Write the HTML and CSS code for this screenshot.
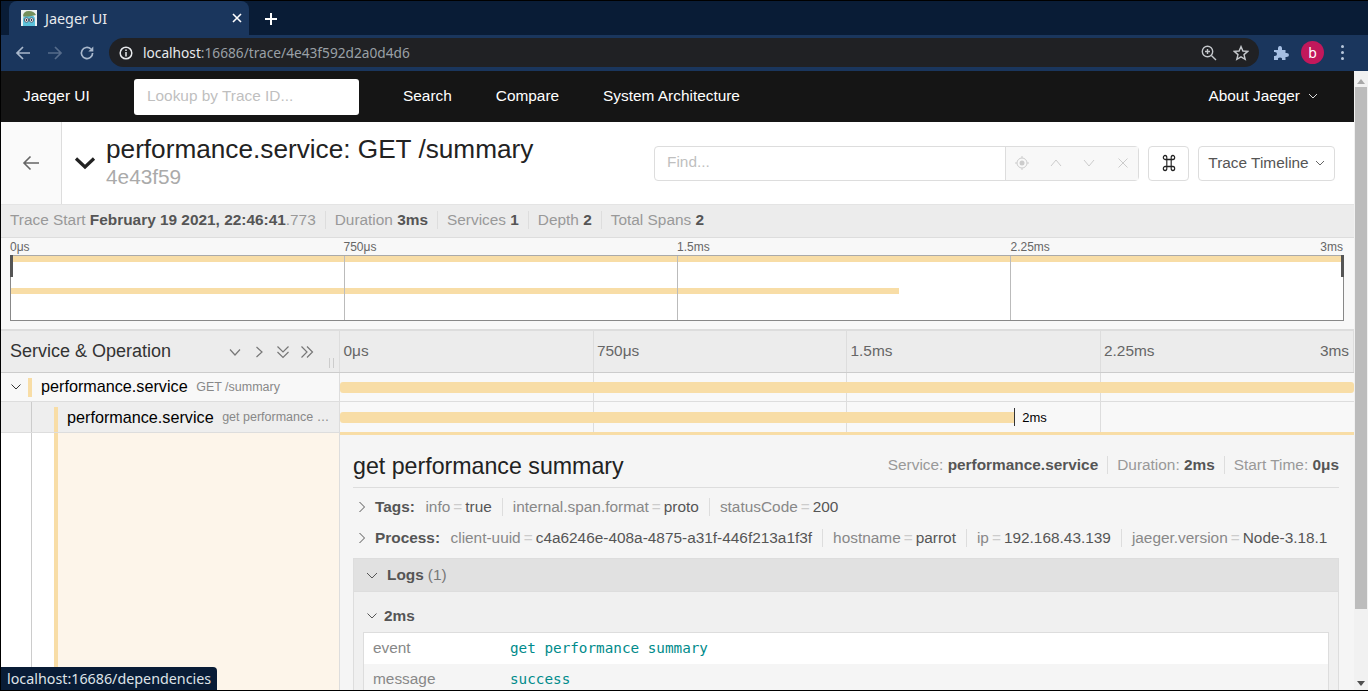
FILE: index.html
```html
<!DOCTYPE html>
<html lang="en">
<head>
    <meta charset="UTF-8">
    <title>Jaeger UI</title>
    <link rel="stylesheet" href="styles.css">
</head>
<body>
    <div class="window">
        <div class="tab-strip">
            <div class="tab">
                <svg class="favicon" width="16" height="16" viewBox="0 0 16 16">
                    <rect width="16" height="16" fill="#eef2f2"/>
                    <path d="M2 16 V9 Q2 5 8 5 Q14 5 14 9 V16 Z" fill="#5cc3dc"/>
                    <path d="M2 6.500 Q2 1 8 1 Q13 1 15 5 L8 6.500 Z" fill="#75905c"/>
                    <circle cx="5.500" cy="10" r="2.200" fill="#fff" stroke="#334" stroke-width=".7"/>
                    <circle cx="10.500" cy="10" r="2.200" fill="#fff" stroke="#334" stroke-width=".7"/>
                    <circle cx="5.500" cy="10" r=".9" fill="#223"/>
                    <circle cx="10.500" cy="10" r=".9" fill="#223"/>
                </svg>
                <span class="tab-title">Jaeger UI</span>
                <svg class="tab-close" width="10" height="10" viewBox="0 0 10 10"><path d="M1 1 L9 9 M9 1 L1 9" stroke="#fff" stroke-width="1.6"/></svg>
            </div>
            <svg class="new-tab" width="12" height="12" viewBox="0 0 12 12"><path d="M6 0 V12 M0 6 H12" stroke="#fff" stroke-width="2"/></svg>
        </div>
        <div class="toolbar">
            <svg class="tool" width="16" height="16" viewBox="0 0 16 16"><path d="M15 8 H2 M8 2 L2 8 L8 14" fill="none" stroke="#a9b8cc" stroke-width="1.7"/></svg>
            <svg class="tool" width="16" height="16" viewBox="0 0 16 16"><path d="M1 8 H14 M8 2 L14 8 L8 14" fill="none" stroke="#566c8b" stroke-width="1.7"/></svg>
            <svg class="tool" width="16" height="16" viewBox="0 0 16 16"><path d="M13.6 8 A5.6 5.6 0 1 1 11.8 3.9" fill="none" stroke="#a9b8cc" stroke-width="1.7"/><path d="M14.3 1.5 V6.5 H9.3 Z" fill="#a9b8cc"/></svg>
            <div class="omnibox">
                <svg width="14" height="14" viewBox="0 0 14 14"><circle cx="7" cy="7" r="5.8" fill="none" stroke="#e8eaed" stroke-width="1.5"/><path d="M7 6 V10.4 M7 3.6 V5" stroke="#e8eaed" stroke-width="1.5"/></svg>
                <span class="url"><b>localhost</b>:16686/trace/4e43f592d2a0d4d6</span>
                <svg class="zoom-icon" width="16" height="16" viewBox="0 0 16 16"><circle cx="6.5" cy="6.5" r="5.2" fill="none" stroke="#c4c7cb" stroke-width="1.4"/><path d="M10.4 10.4 L15 15 M4 6.5 H9 M6.5 4 V9" stroke="#c4c7cb" stroke-width="1.4"/></svg>
                <svg width="16" height="16" viewBox="0 0 16 16"><path d="M8 1.6 L9.9 6 L14.7 6.4 L11 9.6 L12.2 14.3 L8 11.8 L3.8 14.3 L5 9.6 L1.3 6.4 L6.1 6 Z" fill="none" stroke="#c4c7cb" stroke-width="1.4"/></svg>
            </div>
            <svg class="puzzle" width="16" height="16" viewBox="0 0 16 16"><path d="M1 5 H5 Q4.6 1 7 1 Q9.4 1 9 5 H12.5 V8 Q16 7.6 16 10 Q16 12.4 12.5 12 V15 H9 Q9.4 12.6 7 12.6 Q4.6 12.6 5 15 H1 V11 Q4 11.4 4 9 Q4 6.6 1 7 Z" fill="#a6bfe3"/></svg>
            <span class="avatar">b</span>
            <span class="menu-dots"><i></i><i></i><i></i></span>
        </div>
        <div class="page">
            <div class="content">
                <nav class="topnav">
                    <span class="brand">Jaeger UI</span>
                    <span class="lookup">Lookup by Trace ID...</span>
                    <a class="nav-link">Search</a>
                    <a class="nav-link">Compare</a>
                    <a class="nav-link">System Architecture</a>
                    <span class="about">About Jaeger
                        <svg width="10" height="6" viewBox="0 0 10 6"><path d="M1 1 L5 5 L9 1" fill="none" stroke="#ddd" stroke-width="1"/></svg>
                    </span>
                </nav>

                <header class="trace-header">
                    <div class="back-cell">
                        <svg width="18" height="16" viewBox="0 0 18 16"><path d="M17 8 H2 M8.500 1.500 L2 8 L8.500 14.500" fill="none" stroke="#666" stroke-width="1.6"/></svg>
                    </div>
                    <svg class="collapse-icon" width="22" height="14" viewBox="0 0 22 14"><path d="M2 2.500 L11 11 L20 2.500" fill="none" stroke="#222" stroke-width="3.200"/></svg>
                    <div class="trace-title">
                        <h1>performance.service: GET /summary</h1>
                        <small>4e43f59</small>
                    </div>
                    <div class="find-box">
                        <span class="find-input">Find...</span>
                        <span class="find-btns">
                            <svg width="14" height="14" viewBox="0 0 14 14"><circle cx="7" cy="7" r="5" fill="none" stroke="#ccc"/><circle cx="7" cy="7" r="2.500" fill="#ccc"/><path d="M7 0 V2 M7 12 V14 M0 7 H2 M12 7 H14" stroke="#ccc"/></svg>
                            <svg width="14" height="14" viewBox="0 0 14 14"><path d="M2 10 L7 4 L12 10" fill="none" stroke="#ccc"/></svg>
                            <svg width="14" height="14" viewBox="0 0 14 14"><path d="M2 4 L7 10 L12 4" fill="none" stroke="#ccc"/></svg>
                            <svg width="14" height="14" viewBox="0 0 14 14"><path d="M2.500 2.500 L11.500 11.500 M11.500 2.500 L2.500 11.500" fill="none" stroke="#ccc"/></svg>
                        </span>
                    </div>
                    <span class="kbd-btn">
                        <svg width="14" height="18" viewBox="0 0 16 18" preserveAspectRatio="none"><path d="M5.500 5.500 H10.500 V12.500 H5.500 Z M5.500 5.500 H3.500 A2 2 0 1 1 5.500 3.500 V5.500 M10.500 5.500 H12.500 A2 2 0 1 0 10.500 3.500 V5.500 M5.500 12.500 H3.500 A2 2 0 1 0 5.500 14.500 V12.500 M10.500 12.500 H12.500 A2 2 0 1 1 10.500 14.500 V12.500" fill="none" stroke="#222" stroke-width="1.300"/></svg>
                    </span>
                    <span class="view-btn">Trace Timeline
                        <svg width="10" height="6" viewBox="0 0 10 6"><path d="M1 1 L5 5 L9 1" fill="none" stroke="#666"/></svg>
                    </span>
                </header>

                <div class="summary">
                    <span class="stat">Trace Start <b>February 19 2021, 22:46:41</b>.773</span>
                    <span class="stat">Duration <b>3ms</b></span>
                    <span class="stat">Services <b>1</b></span>
                    <span class="stat">Depth <b>2</b></span>
                    <span class="stat">Total Spans <b>2</b></span>
                </div>

                <section class="minimap">
                    <div class="mini-labels">
                        <span>0μs</span><span>750μs</span><span>1.5ms</span><span>2.25ms</span><span class="last">3ms</span>
                    </div>
                    <div class="mini-canvas">
                        <div class="mini-bar mini-bar-root"></div>
                        <div class="mini-bar mini-bar-child" style="width: 66.7%"></div>
                        <div class="mini-ticks"><i></i><i></i><i></i><i></i></div>
                        <span class="handle handle-left"></span>
                        <span class="handle handle-right"></span>
                    </div>
                </section>

                <section class="timeline">
                    <div class="tl-header">
                        <div class="tl-left">
                            <span class="tl-title">Service &amp; Operation</span>
                            <span class="tl-controls">
                                <svg width="14" height="14" viewBox="0 0 14 14"><path d="M2 4.500 L7 10 L12 4.500" fill="none" stroke="#777" stroke-width="1.200"/></svg>
                                <svg width="14" height="14" viewBox="0 0 14 14"><path d="M4.500 2 L10 7 L4.500 12" fill="none" stroke="#777" stroke-width="1.200"/></svg>
                                <svg width="14" height="14" viewBox="0 0 14 14"><path d="M1.500 1.500 L7 7 L12.500 1.500 M1.500 7 L7 12.500 L12.500 7" fill="none" stroke="#777" stroke-width="1.200"/></svg>
                                <svg width="14" height="14" viewBox="0 0 14 14"><path d="M1.500 1.500 L7 7 L1.500 12.500 M7 1.500 L12.500 7 L7 12.500" fill="none" stroke="#777" stroke-width="1.200"/></svg>
                            </span>
                            <span class="resizer"></span>
                        </div>
                        <div class="tl-right tl-ticks">
                            <span>0μs</span><span>750μs</span><span>1.5ms</span><span>2.25ms</span><span class="last">3ms</span>
                        </div>
                    </div>

                    <div class="span-row">
                        <div class="span-name root-name">
                            <svg class="toggle" width="10" height="6" viewBox="0 0 10 6"><path d="M.500 .500 L5 5 L9.500 .500" fill="none" stroke="#333"/></svg>
                            <span class="color-mark"></span>
                            <span class="svc">performance.service</span>
                            <span class="op">GET /summary</span>
                        </div>
                        <div class="span-view">
                            <div class="grid-lines"><i></i><i></i><i></i><i></i></div>
                            <div class="span-bar" style="width: 100%"></div>
                        </div>
                    </div>

                    <div class="span-row child-row">
                        <div class="span-name child-name">
                            <span class="indent"></span>
                            <span class="color-mark"></span>
                            <span class="svc">performance.service</span>
                            <span class="op">get performance …</span>
                        </div>
                        <div class="span-view">
                            <div class="grid-lines"><i></i><i></i><i></i><i></i></div>
                            <div class="span-bar" style="width: 66.500%"></div>
                            <span class="span-label">2ms</span>
                        </div>
                    </div>

                    <div class="detail-row">
                        <div class="detail-gutter">
                            <span class="indent"></span>
                            <span class="color-strip"></span>
                            <span class="gutter-fill"></span>
                        </div>
                        <div class="detail">
                            <div class="detail-head">
                                <h2>get performance summary</h2>
                                <div class="detail-meta">
                                    <span class="stat">Service: <b>performance.service</b></span>
                                    <span class="stat">Duration: <b>2ms</b></span>
                                    <span class="stat">Start Time: <b>0μs</b></span>
                                </div>
                            </div>
                            <div class="kv-line kv-first">
                                <svg width="8" height="12" viewBox="0 0 8 12"><path d="M1.500 1 L6.500 6 L1.500 11" fill="none" stroke="#555"/></svg>
                                <b>Tags:</b>
                                <span class="kv">info<i>=</i><em>true</em></span>
                                <span class="kv">internal.span.format<i>=</i><em>proto</em></span>
                                <span class="kv">statusCode<i>=</i><em>200</em></span>
                            </div>
                            <div class="kv-line">
                                <svg width="8" height="12" viewBox="0 0 8 12"><path d="M1.500 1 L6.500 6 L1.500 11" fill="none" stroke="#555"/></svg>
                                <b>Process:</b>
                                <span class="kv">client-uuid<i>=</i><em>c4a6246e-408a-4875-a31f-446f213a1f3f</em></span>
                                <span class="kv">hostname<i>=</i><em>parrot</em></span>
                                <span class="kv">ip<i>=</i><em>192.168.43.139</em></span>
                                <span class="kv">jaeger.version<i>=</i><em>Node-3.18.1</em></span>
                            </div>
                            <div class="logs">
                                <div class="logs-head">
                                    <svg width="12" height="7" viewBox="0 0 12 7"><path d="M1 1 L6 6 L11 1" fill="none" stroke="#555"/></svg>
                                    <b>Logs</b> <span>(1)</span>
                                </div>
                                <div class="logs-body">
                                    <div class="log-time">
                                        <svg width="10" height="6" viewBox="0 0 10 6"><path d="M.500 .500 L5 5 L9.500 .500" fill="none" stroke="#555"/></svg>
                                        <b>2ms</b>
                                    </div>
                                    <div class="log-table">
                                        <div class="log-row"><span class="log-key">event</span><code>get performance summary</code></div>
                                        <div class="log-row log-row-alt"><span class="log-key">message</span><code>success</code></div>
                                    </div>
                                </div>
                            </div>
                        </div>
                    </div>
                </section>
            </div>
            <div class="scrollbar">
                <span class="arrow-up"></span>
                <span class="thumb"></span>
                <span class="arrow-down"></span>
            </div>
        </div>
        <div class="status-bubble">localhost:16686/dependencies</div>
    </div>
</body>
</html>
```
FILE: styles.css
```css
* {
    box-sizing: border-box;
}
html, body {
    margin: 0;
    height: 100%;
    overflow: hidden;
}
body {
    font-family: "Liberation Sans", Arial, sans-serif;
    background-color: #000;
}
b {
    font-weight: 700;
}

/* browser chrome */
.window {
    position: relative;
    height: 691px;
    border: 1px solid #000;
    border-right: 0;
    display: flex;
    flex-direction: column;
    overflow: hidden;
}
.tab-strip {
    height: 34px;
    flex: none;
    background-color: #091c36;
    display: flex;
    align-items: stretch;
    padding-left: 8px;
}
.tab {
    width: 240px;
    background-color: #1a365d;
    border-radius: 8px 8px 0 0;
    display: flex;
    align-items: center;
    padding-left: 12px;
    color: #e8eaed;
    font-family: "Noto Sans", sans-serif;
    font-size: 14.400px;
}
.tab-title {
    margin-left: 8px;
    flex: 1;
}
.tab-close {
    margin-right: 7px;
}
.new-tab {
    margin: 12px 0 0 16px;
}
.toolbar {
    height: 36px;
    flex: none;
    background-color: #1a365d;
    display: flex;
    align-items: center;
    padding-left: 14px;
    padding-bottom: 1px;
}
.tool {
    margin-right: 16px;
}
.omnibox {
    width: 1150px;
    height: 29px;
    margin-left: -2px;
    background-color: #202124;
    border-radius: 15px;
    display: flex;
    align-items: center;
    padding: 0 10px;
    gap: 16px;
}
.url {
    flex: 1;
    margin-left: -6px;
    font-family: "Noto Sans", sans-serif;
    font-size: 13.700px;
    color: #9aa0a6;
}
.url b {
    font-weight: 400;
    color: #e8eaed;
}
.puzzle {
    margin-left: 14px;
}
.avatar {
    width: 23px;
    height: 23px;
    margin-left: 12px;
    border-radius: 50%;
    background-color: #c2185b;
    color: #fff;
    font-family: "Noto Sans", sans-serif;
    font-size: 14px;
    display: flex;
    align-items: center;
    justify-content: center;
}
.menu-dots {
    margin-left: 17px;
    display: flex;
    flex-direction: column;
    gap: 3px;
}
.menu-dots i {
    width: 3px;
    height: 3px;
    border-radius: 50%;
    background-color: #b8c7dc;
}
.status-bubble {
    position: absolute;
    left: -1px;
    bottom: 0;
    height: 23px;
    padding: 0 6px 0 7px;
    background-color: #091c36;
    border-radius: 0 4px 0 0;
    color: #dfe3e8;
    font-family: "Noto Sans", sans-serif;
    font-size: 14.300px;
    line-height: 23px;
}

/* page */
.page {
    flex: 1;
    min-height: 0;
    display: flex;
}
.content {
    flex: 1;
    min-width: 0;
    background-color: #fff;
    overflow: hidden;
}
.scrollbar {
    width: 14px;
    flex: none;
    background-color: #f1f1f1;
    display: flex;
    flex-direction: column;
    align-items: center;
    padding-top: 8px;
}
.thumb {
    width: 12px;
    height: 522px;
    margin-top: 3px;
    background-color: #bcbcbc;
}
.arrow-up {
    border: 4px solid transparent;
    border-top: 0;
    border-bottom: 5px solid #a8a8a8;
}
.arrow-down {
    margin-top: auto;
    margin-bottom: 4px;
    border: 4px solid transparent;
    border-bottom: 0;
    border-top: 5px solid #505050;
}

/* top navigation */
.topnav {
    height: 51px;
    background-color: #151515;
    display: flex;
    align-items: center;
    padding-left: 22px;
    color: #fff;
    font-size: 15.400px;
}
.brand {
    width: 111px;
    padding-bottom: 2px;
}
.lookup {
    width: 225px;
    height: 36px;
    background-color: #fff;
    border-radius: 3px;
    padding-left: 13px;
    margin-right: 22px;
    line-height: 33px;
    color: #bfbfbf;
}
.nav-link {
    padding: 0 22px 2px;
}
.about {
    margin-left: auto;
    margin-right: 36px;
    padding-bottom: 2px;
    display: flex;
    align-items: center;
    gap: 8px;
}

/* trace header */
.trace-header {
    height: 83px;
    display: flex;
    align-items: center;
    border-bottom: 1px solid #e4e4e4;
}
.back-cell {
    width: 61px;
    height: 100%;
    flex: none;
    background-color: #fafafa;
    border-right: 1px solid #ddd;
    display: flex;
    align-items: center;
    justify-content: center;
}
.collapse-icon {
    margin: 0 10px 0 12px;
}
.trace-title {
    width: 548px;
    margin-top: -4px;
}
.trace-title h1 {
    margin: 0;
    font-size: 26.200px;
    font-weight: 400;
    line-height: 30px;
    color: #222;
}
.trace-title small {
    display: block;
    margin-top: 1px;
    font-size: 20.800px;
    line-height: 24px;
    color: #aaa;
}
.find-box {
    width: 485px;
    height: 35px;
    border: 1px solid #ddd;
    border-radius: 4px;
    display: flex;
    font-size: 15.400px;
}
.find-input {
    width: 351px;
    border-right: 1px solid #ddd;
    padding-left: 12px;
    line-height: 29px;
    color: #bfbfbf;
}
.find-btns {
    flex: 1;
    background-color: #f8f8f8;
    display: flex;
    align-items: center;
    padding-left: 9px;
    gap: 19.500px;
}
.kbd-btn {
    width: 41px;
    height: 35px;
    margin-left: 9px;
    border: 1px solid #ddd;
    border-radius: 4px;
    display: flex;
    align-items: center;
    justify-content: center;
}
.view-btn {
    width: 137px;
    height: 35px;
    margin-left: 9px;
    border: 1px solid #ddd;
    border-radius: 4px;
    display: flex;
    align-items: center;
    justify-content: center;
    gap: 6px;
    font-size: 15.400px;
    color: #555;
}

/* summary line */
.summary {
    height: 33px;
    background-color: #ececec;
    border-bottom: 1px solid #ddd;
    display: flex;
    align-items: center;
    padding: 0 0 2px 9px;
    font-size: 15.400px;
    color: #999;
}
.stat {
    padding-right: 9px;
    margin-right: 9px;
    border-right: 1px solid #ddd;
}
.stat:last-child {
    border-right: 0;
    padding-right: 0;
    margin-right: 0;
}
.stat b {
    color: #555;
}

/* minimap */
.minimap {
    height: 93px;
    padding: 0 9px;
    background-color: #f8f8f8;
    border-bottom: 2px solid #ddd;
}
.mini-labels {
    display: flex;
    height: 17px;
    font-size: 12px;
    line-height: 18px;
    color: #666;
}
.mini-labels span {
    width: 333.500px;
    flex: none;
}
.mini-labels .last {
    width: 30px;
    margin-left: -31px;
    text-align: right;
}
.mini-canvas {
    position: relative;
    width: 1334px;
    height: 66px;
    background-color: #fff;
    border: 1px solid #888;
    border-top-color: #aaa;
}
.mini-ticks {
    position: absolute;
    inset: 0 -1px 0 1px;
    display: grid;
    grid-template-columns: repeat(4, 1fr);
}
.mini-ticks i {
    border-right: 1px solid #bbb;
}
.mini-ticks i:last-child {
    border-right: 0;
}
.mini-bar {
    height: 6px;
    background-color: #f8dda6;
}
.mini-bar-child {
    margin-top: 26px;
}
.handle {
    position: absolute;
    top: -1px;
    width: 3px;
    height: 22px;
    background-color: #555;
}
.handle-left {
    left: -1px;
}
.handle-right {
    right: -1px;
}

/* timeline */
.tl-header {
    height: 42px;
    display: flex;
    background-color: #ececec;
    border-bottom: 1px solid #ccc;
}
.tl-left {
    position: relative;
    width: 339px;
    flex: none;
    display: flex;
    align-items: center;
    padding-left: 9px;
    border-right: 1px solid #ddd;
}
.tl-title {
    width: 218px;
    flex: none;
    font-size: 18px;
    color: #333;
}
.tl-controls {
    display: flex;
    gap: 10px;
}
.resizer {
    position: absolute;
    right: 5px;
    bottom: 4px;
    width: 5px;
    height: 10px;
    border: 1px solid #ccc;
    border-width: 0 1px;
}
.tl-right {
    flex: 1;
    min-width: 0;
}
.tl-ticks {
    display: flex;
    align-items: center;
    font-size: 15.400px;
    color: #666;
}
.tl-ticks span {
    width: 253.500px;
    flex: none;
    height: 100%;
    padding-left: 3.500px;
    line-height: 40px;
    border-right: 1px solid #ddd;
}
.tl-ticks .last {
    width: 40px;
    margin-left: -40px;
    padding: 0 5px 0 0;
    text-align: right;
    border-right: 0;
}

.span-row {
    height: 29px;
    display: flex;
    border-bottom: 1px solid #ddd;
    background-color: #f8f8f8;
}
.child-row {
    height: 30px;
    border-bottom: 0;
}
.span-name {
    width: 339px;
    flex: none;
    display: flex;
    align-items: center;
    white-space: nowrap;
    overflow: hidden;
    border-right: 1px solid #ddd;
}
.child-name {
    background-color: #eee;
}
.toggle {
    margin: 0 7px 0 10px;
}
.color-mark {
    width: 4px;
    height: 19px;
    margin-right: 9px;
    background-color: #f8dda6;
}
.indent {
    width: 31px;
    height: 100%;
    flex: none;
    border-right: 1px solid #ccc;
}
.child-name .indent {
    margin-right: 22px;
}
.child-name .color-mark {
    align-self: flex-end;
    height: 25px;
}
.svc {
    font-size: 16.200px;
    color: #000;
}
.root-name .svc {
    margin-bottom: 2px;
}
.op {
    margin-left: 8.500px;
    font-size: 12.500px;
    color: #888;
}
.span-view {
    position: relative;
    flex: 1;
    min-width: 0;
    display: flex;
    align-items: center;
}
.grid-lines {
    position: absolute;
    inset: 0;
    display: grid;
    grid-template-columns: repeat(4, 1fr);
}
.grid-lines i {
    border-right: 1px solid #ddd;
}
.grid-lines i:last-child {
    border-right: 0;
}
.span-bar {
    position: relative;
    height: 11px;
    background-color: #f8dda6;
    border-radius: 3px;
}
.child-row .span-bar {
    border-radius: 3px 0 0 3px;
}
.span-label {
    position: relative;
    margin-left: 8px;
    padding-top: 1px;
    font-size: 13px;
    color: #000;
}
.span-label::before {
    content: "";
    position: absolute;
    left: -8px;
    top: -1px;
    height: 18px;
    border-left: 1px solid #333;
}

/* expanded span */
.detail-row {
    display: flex;
}
.detail-gutter {
    width: 339px;
    height: 258px;
    flex: none;
    display: flex;
    border-top: 1px solid #ddd;
    border-right: 1px solid #ddd;
}
.color-strip {
    width: 4px;
    margin-left: 22px;
    background-color: #f8dda6;
}
.gutter-fill {
    flex: 1;
    background-color: #fdf5ea;
}
.detail {
    flex: 1;
    min-width: 0;
    padding: 0 15px 0 13px;
    background-color: #f5f5f5;
    border-top: 3px solid #f8dda6;
    overflow: hidden;
    font-size: 15.400px;
}
.detail-head {
    height: 53px;
    display: flex;
    align-items: center;
    justify-content: space-between;
    padding-top: 10px;
    border-bottom: 1px solid #ddd;
}
.detail-head h2 {
    margin: 0;
    font-size: 23.200px;
    font-weight: 400;
    color: #222;
}
.detail-meta {
    display: flex;
    padding-bottom: 3px;
    color: #999;
}
.kv-line {
    height: 31px;
    display: flex;
    align-items: center;
    padding-left: 5px;
    white-space: nowrap;
}
.kv-first {
    margin-top: 3px;
}
.kv-line b {
    margin: 0 10.500px 0 9px;
    color: #555;
}
.kv {
    padding-right: 10px;
    margin-right: 10px;
    border-right: 1px solid #ddd;
    color: #888;
}
.kv:last-child {
    border-right: 0;
    padding-right: 0;
    margin-right: 0;
}
.kv i {
    margin: 0 3px;
    font-style: normal;
    color: #ccc;
}
.kv em {
    font-style: normal;
    color: #555;
}
.logs {
    margin-top: 5px;
    border: 1px solid #ddd;
    background-color: #f0f0f0;
}
.logs-head {
    height: 33px;
    display: flex;
    align-items: center;
    gap: 4px;
    padding-left: 12px;
    background-color: #e1e1e1;
    border-bottom: 1px solid #ddd;
    color: #777;
}
.logs-head b {
    margin-left: 5px;
    color: #555;
}
.logs-body {
    padding: 0 9px;
}
.log-time {
    height: 40px;
    display: flex;
    align-items: center;
    gap: 7px;
    padding: 8px 0 0 4px;
}
.log-time b {
    color: #555;
}
.log-table {
    border: 1px solid #ddd;
    border-bottom: 0;
    background-color: #fff;
}
.log-row {
    height: 31px;
    display: flex;
    align-items: center;
    padding: 0 0 2px 9px;
}
.log-row-alt {
    background-color: #f5f5f5;
}
.log-key {
    width: 137px;
    color: #888;
}
.log-row code {
    font-family: "DejaVu Sans Mono", monospace;
    font-size: 14.300px;
    color: #008b8b;
}
```
